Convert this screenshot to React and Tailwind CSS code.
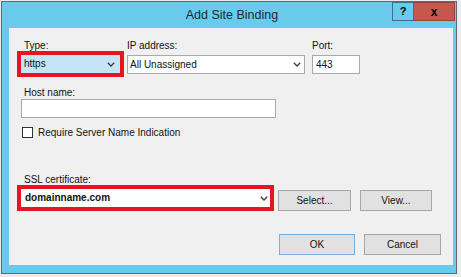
import React from "react";

const font = { fontFamily: '"Liberation Sans", Arial, sans-serif' };

function Chevron({ className = "" }) {
  return (
    <svg width="8" height="5" viewBox="0 0 8 5" className={className}>
      <path d="M0.8 0.8 L4 4 L7.2 0.8" fill="none" stroke="#3a3a3a" strokeWidth="1.3" />
    </svg>
  );
}

function Btn({ children, def = false, w = "w-[73px]" }) {
  return (
    <div
      className={`${w} h-[21px] flex items-center justify-center text-[10px] text-[#111] bg-[#e1e1e1] border ${
        def ? "border-[#7aaedb]" : "border-[#a6a6a6]"
      }`}
    >
      {children}
    </div>
  );
}

export default function App() {
  return (
    <div className="w-[461px] h-[277px] bg-[#ebebeb] pl-px pt-px overflow-hidden" style={font}>
      <div className="w-[456px] h-[273px] border border-[#5b6b73] bg-[#68cbeb] flex flex-col">
        {/* title bar */}
        <div className="h-[26px] flex items-start relative">
          <div className="flex-1 h-full flex items-center justify-center pl-[6px] text-[12.5px] text-[#1b2a33]">
            Add Site Binding
          </div>
          <div className="absolute left-[390px] top-0 flex">
            <div className="w-[22px] h-[19px] border border-[#3f6f8a] bg-[#68cbeb] flex items-center justify-center text-[11px] font-bold text-black">
              ?
            </div>
            <div className="w-[41px] h-[19px] bg-[#c7574d] border-y border-r border-[#9a4039] flex items-center justify-center text-[12px] font-bold text-black leading-none">
              x
            </div>
          </div>
        </div>
        {/* content */}
        <div className="ml-[7px] mr-[3px] h-[237px] bg-[#f0f0f0] text-[10px] text-[#111] leading-[10px] pt-[13px]">
          {/* row 1 */}
          <div className="flex items-start pl-[8px]">
            <div className="w-[107px] flex flex-col">
              <div className="h-[10px] pl-[7px]">Type:</div>
              <div className="h-[26px] border-[4px] border-[#e8141f] bg-[#c4e5f8] flex items-center justify-between pl-[3px] pr-[5px]">
                <span>https</span>
                <Chevron />
              </div>
            </div>
            <div className="ml-[3px] w-[178px] flex flex-col">
              <div className="h-[10px] pl-[0px]">IP address:</div>
              <div className="mt-[4px] h-[19px] border border-[#a9a9a9] bg-white flex items-center justify-between pl-[2px] pr-[3px]">
                <span>All Unassigned</span>
                <Chevron />
              </div>
            </div>
            <div className="ml-[7px] w-[48px] flex flex-col">
              <div className="h-[10px]">Port:</div>
              <div className="mt-[4px] h-[19px] border border-[#a9a9a9] bg-white flex items-center pl-[3px]">
                443
              </div>
            </div>
          </div>
          {/* host name */}
          <div className="mt-[11px] pl-[15px]">Host name:</div>
          <div className="mt-[1px] ml-[12px] w-[255px] h-[19px] border border-[#a9a9a9] bg-white" />
          {/* checkbox */}
          <div className="mt-[9px] ml-[13px] flex items-center">
            <div className="w-[11px] h-[11px] border border-[#333] bg-white" />
            <span className="ml-[5px]">Require Server Name Indication</span>
          </div>
          {/* SSL */}
          <div className="mt-[37px] pl-[15px]">SSL certificate:</div>
          <div className="flex items-end pl-[8px]">
            <div className="w-[257px] h-[26px] border-[4px] border-[#e8141f] bg-white flex items-center justify-between pl-[4px] pr-[2px]">
              <span className="font-bold text-[10px] text-[#111]">domainname.com</span>
              <Chevron />
            </div>
            <div className="ml-[4px]">
              <Btn>Select...</Btn>
            </div>
            <div className="ml-[9px]">
              <Btn w="w-[72px]">View...</Btn>
            </div>
          </div>
          {/* OK / Cancel */}
          <div className="mt-[23px] flex justify-end pr-[12px]">
            <Btn def w="w-[76px]">OK</Btn>
            <div className="ml-[9px]">
              <Btn w="w-[77px]">Cancel</Btn>
            </div>
          </div>
        </div>
      </div>
    </div>
  );
}
